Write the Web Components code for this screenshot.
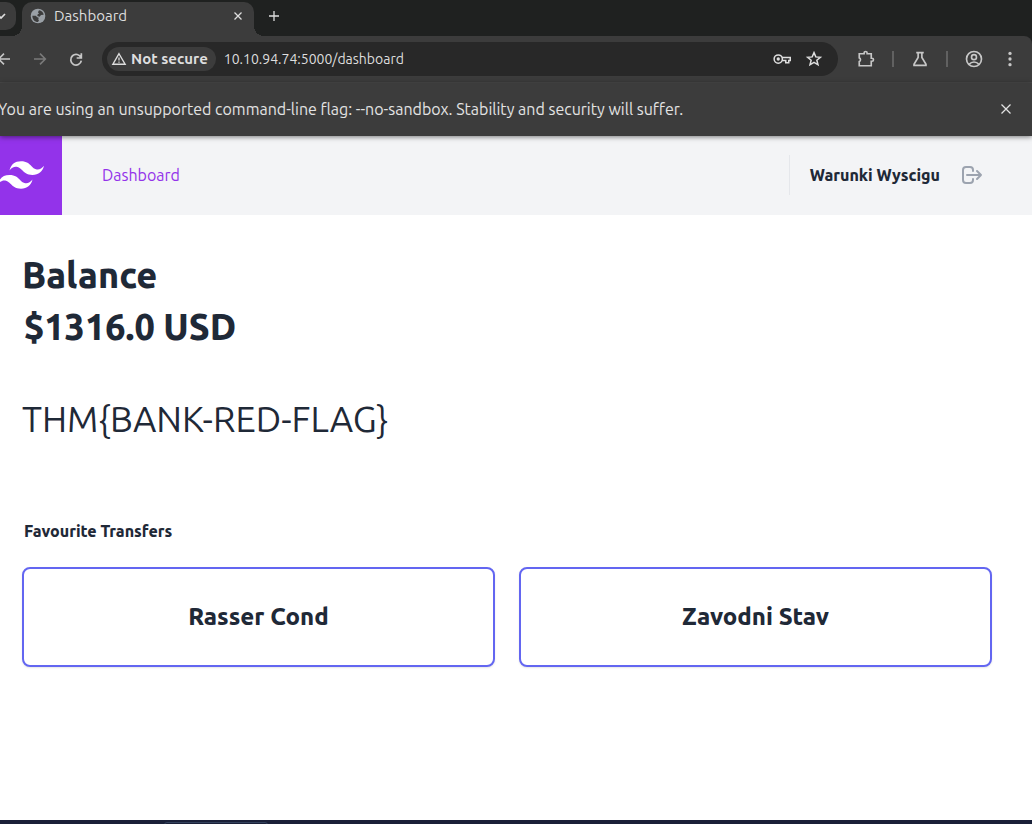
<!DOCTYPE html>
<html lang="en">
<head>
<meta charset="utf-8">
<meta name="viewport" content="width=device-width, initial-scale=1">
<title>Dashboard</title>
<style>
  body { margin: 0; font-family: Ubuntu, "Noto Sans", sans-serif; color: #1f2937; background: #fff; overflow-x: hidden; }
</style>
</head>
<body>
<browser-window></browser-window>

<script>
const ICONS = {
  chevron: '<path d="m6 9 6 6 6-6" stroke-width="2.6"/>',
  back: '<path d="M21 12H4m8-8-8 8 8 8" stroke-width="2.4"/>',
  forward: '<path d="M3 12h17m-8-8 8 8-8 8" stroke-width="2.4"/>',
  reload: '<path d="M20 3.500v7h-7M19.500 10A8 8 0 1 0 20 14.500" stroke-width="2.600"/>',
  close: '<path d="m5 5 14 14M19 5 5 19" stroke-width="2.600"/>',
  thinClose: '<path d="m3 3 18 18M21 3 3 21" stroke-width="2.500"/>',
  plus: '<path d="M12 2v20M2 12h20" stroke-width="2.600"/>',
  globe: '<circle cx="12" cy="12" r="11" fill="#9aa0a6" stroke="none"/><path fill="#3c3c3c" stroke="none" d="M13.500 3.500c4 .5 6.500 3 7 6.500l-4 .5-2 2.500-3.500-1 .5-2.500 2-1-1.500-2zM3.500 11.500h5l2.500 2.500 2 .5-.5 3 1 1-1.500 2.500c-5-.3-8.500-4-8.500-9.500z"/>',
  warning: '<path d="M12 3 22.500 21H1.500z" stroke-width="2.400"/><path d="M12 9.500v5M12 16.300v2" stroke-width="2.200"/>',
  key: '<circle cx="7" cy="12" r="5.500" stroke-width="2"/><circle cx="7" cy="12" r="2.200" fill="currentColor" stroke="none"/><path d="M12 10h11v4h-2v3h-4v-3h-5" stroke-width="2"/>',
  star: '<path d="m12 3.500 2.400 5.700 6.100.5-4.700 4 1.500 6-5.300-3.200-5.300 3.200 1.500-6-4.700-4 6.100-.5z" stroke-width="2"/>',
  puzzle: '<path d="M3 5h6.500V4a2 2 0 0 1 4 0v1H19v6h1a1.800 1.800 0 0 1 0 4h-1v6H3v-5.500a2.700 2.700 0 0 0 0-5z" stroke-width="2.200"/>',
  flask: '<path d="M7 3.500h10M9.500 4v6L4 19v1.500h16V19l-5.500-9V4" stroke-width="2.200"/>',
  avatar: '<circle cx="12" cy="12" r="10" stroke-width="2.200"/><circle cx="12" cy="9.500" r="3.300" stroke-width="2.200"/><path d="M5.500 19c3.500-4 9.500-4 13 0" stroke-width="2.200"/>',
  dots: '<g fill="currentColor" stroke="none"><circle cx="12" cy="4.500" r="2.200"/><circle cx="12" cy="12" r="2.200"/><circle cx="12" cy="19.500" r="2.200"/></g>',
  logout: '<path stroke-linecap="round" stroke-linejoin="round" stroke-width="2" d="M17 16l4-4m0 0l-4-4m4 4H7m6 4v1a3 3 0 01-3 3H6a3 3 0 01-3-3V7a3 3 0 013-3h4a3 3 0 013 3v1"/>'
};

function define(name, markup, setup) {
  const template = document.createElement('template');
  template.innerHTML = '<style>*{box-sizing:border-box}button,input{font:inherit;color:inherit;border:0;background:none;padding:0;margin:0}button{cursor:pointer}</style>' + markup;
  customElements.define(name, class extends HTMLElement {
    constructor() {
      super();
      this.attachShadow({ mode: 'open' }).append(template.content.cloneNode(true));
    }
    connectedCallback() { if (setup) setup(this, this.shadowRoot); }
  });
}

define('ui-icon', `
  <style>
    :host { display: block; flex: none; width: var(--size, 18px); height: var(--size, 18px); }
    svg { display: block; width: 100%; height: 100%; overflow: visible; }
  </style>
  <svg viewBox="0 0 24 24" fill="none" stroke="currentColor" aria-hidden="true"></svg>`,
  (el, root) => { root.querySelector('svg').innerHTML = ICONS[el.getAttribute('name')]; });

define('icon-button', `
  <style>
    :host { display: block; flex: none; width: 36px; height: 34px; }
    button { display: flex; align-items: center; justify-content: center; width: 100%; height: 100%; }
  </style>
  <button type="button"></button>`,
  (el, root) => {
    const button = root.querySelector('button');
    button.setAttribute('aria-label', el.getAttribute('label'));
    const icon = document.createElement('ui-icon');
    icon.setAttribute('name', el.getAttribute('icon'));
    button.replaceChildren(icon);
  });

define('tab-strip', `
  <style>
    :host { display: flex; height: 36px; padding-top: 2px; background: #1f2120; color: #dedede; }
    .search { width: 30px; height: 28px; margin-left: -14px; border-radius: 10px; background: #3c3c3c; --size: 16px; }
    .tab { position: relative; display: flex; align-items: center; width: 232px; height: 34px; margin-left: 6px; padding: 0 0 6px 8px; border-radius: 10px 10px 0 0; background: #3c3c3c; font-size: 15px; line-height: 20px; }
    .tab::before, .tab::after { content: ""; position: absolute; bottom: 0; width: 10px; height: 10px; }
    .tab::before { right: 100%; background: radial-gradient(circle at 0 0, transparent 10px, #3c3c3c 10px); }
    .tab::after { left: 100%; background: radial-gradient(circle at 100% 0, transparent 10px, #3c3c3c 10px); }
    .tab ui-icon { --size: 16px; margin-right: 8px; }
    .title { flex: 1; text-align: left; }
    .close { width: 32px; height: 28px; --size: 12px; }
    .new { width: 40px; height: 28px; --size: 12px; }
  </style>
  <icon-button class="search" icon="chevron" label="Search tabs"></icon-button>
  <div class="tab"><ui-icon name="globe"></ui-icon><button class="title" type="button">Dashboard</button><icon-button class="close" icon="close" label="Close tab"></icon-button></div>
  <icon-button class="new" icon="plus" label="New tab"></icon-button>`);

define('address-bar', `
  <style>
    :host { display: flex; flex: 1; align-items: center; min-width: 0; height: 34px; padding: 0 8px 0 5px; border-radius: 17px; background: #282828; color: #dedede; }
    .chip { display: flex; align-items: center; gap: 5px; flex: none; height: 24px; padding: 0 8px 0 5px; border-radius: 12px; background: #3c3c3c; font-size: 15px; line-height: 20px; font-weight: 600; --size: 14px; }
    input { flex: 1; min-width: 0; height: 24px; margin-left: 8px; font-size: 14px; outline: 0; }
    icon-button { width: 32px; --size: 18px; }
  </style>
  <button class="chip" type="button"><ui-icon name="warning"></ui-icon>Not secure</button>
  <input type="text" aria-label="Address" value="10.10.94.74:5000/dashboard" spellcheck="false">
  <icon-button icon="key" label="Passwords"></icon-button>
  <icon-button icon="star" label="Bookmark"></icon-button>`);

define('tool-bar', `
  <style>
    :host { display: block; background: #1f2120; }
    .row { display: flex; align-items: center; height: 47px; padding: 0 4px 0 0; border-bottom: 1px solid #4a4a4a; border-radius: 0 8px 0 0; background: #3c3c3c; color: #c7c7c7; }
    .nav { --size: 16px; }
    .first { margin-left: -14px; }
    .off { color: #7a7a7a; }
    address-bar { margin: 0 10px 0 8px; }
    .rule { flex: none; width: 2px; height: 16px; margin: 0 8px; background: #616161; }
  </style>
  <div class="row">
    <icon-button class="nav first" icon="back" label="Back"></icon-button>
    <icon-button class="nav off" icon="forward" label="Forward"></icon-button>
    <icon-button class="nav" icon="reload" label="Reload"></icon-button>
    <address-bar></address-bar>
    <icon-button icon="puzzle" label="Extensions"></icon-button>
    <span class="rule"></span>
    <icon-button icon="flask" label="Experiments"></icon-button>
    <span class="rule"></span>
    <icon-button icon="avatar" label="Profile"></icon-button>
    <icon-button icon="dots" label="Menu"></icon-button>
  </div>`);

define('info-bar', `
  <style>
    :host { position: relative; display: flex; align-items: center; height: 53px; padding: 0 8px 2px 0; background: #3c3c3c; color: #e3e3e3; box-shadow: 0 1px 5px rgba(0,0,0,.5); }
    p { flex: 1; margin: 0 0 0 -2px; font-size: 16px; line-height: 24px; white-space: nowrap; }
    icon-button { --size: 12px; }
  </style>
  <p><slot></slot></p>
  <icon-button icon="thinClose" label="Dismiss"></icon-button>`);

define('site-header', `
  <style>
    :host { display: flex; align-items: center; height: 79px; padding-right: 36px; background: #f3f4f6; font-size: 16px; line-height: 24px; }
    .logo { display: flex; align-items: center; justify-content: center; flex: none; width: 80px; height: 100%; margin-left: -18px; padding: 0 2px 2px 0; background: #9333ea; }
    .logo svg { display: block; width: 46px; height: 28px; }
    nav, .user, icon-button { margin-bottom: 2px; }
    nav { flex: 1; padding-left: 40px; font-weight: 450; }
    nav a { color: #9333ea; text-decoration: none; }
    .user { display: flex; align-items: center; height: 40px; padding-left: 20px; border-left: 1px solid #e5e7eb; font-weight: 800; }
    icon-button { width: 48px; margin-left: 8px; color: #9ca3af; --size: 24px; }
  </style>
  <a class="logo" href="#" aria-label="Home"><svg viewBox="0 0 51.034 30.436" fill="#fff" aria-hidden="true"><path d="M25.517 0C18.712 0 14.46 3.382 12.758 10.146c2.552-3.382 5.529-4.65 8.931-3.805 1.941.482 3.329 1.882 4.864 3.432 2.502 2.524 5.398 5.445 11.722 5.445 6.804 0 11.057-3.382 12.758-10.145-2.551 3.382-5.528 4.65-8.93 3.804-1.942-.482-3.33-1.882-4.865-3.431C34.736 2.92 31.841 0 25.517 0zM12.758 15.218C5.954 15.218 1.701 18.6 0 25.364c2.552-3.382 5.529-4.65 8.93-3.805 1.942.482 3.33 1.882 4.865 3.432 2.502 2.524 5.397 5.445 11.722 5.445 6.804 0 11.057-3.381 12.758-10.145-2.552 3.382-5.529 4.65-8.931 3.805-1.941-.483-3.329-1.883-4.864-3.432-2.502-2.524-5.398-5.446-11.722-5.446z"/></svg></a>
  <nav><a href="#dashboard">Dashboard</a></nav>
  <div class="user"><span><slot></slot></span></div>
  <icon-button icon="logout" label="Log out"></icon-button>`);

define('transfer-card', `
  <style>
    :host { display: block; }
    button { display: block; width: 100%; padding: 32px 16px; border: 2px solid #6366f1; border-radius: 8px; background: #fff; box-shadow: 0 1px 2px rgba(0,0,0,.1); font-size: 24px; line-height: 32px; font-weight: 800; text-align: center; }
  </style>
  <button type="button"><slot></slot></button>`);

define('account-page', `
  <style>
    :host { display: block; padding: 34px 40px 40px 22px; }
    h1, h2, p { margin: 0; }
    h1, .amount { font-size: 36px; line-height: 52px; font-weight: 800; }
    .flag { margin-top: 40px; font-size: 36px; line-height: 52px; font-weight: 450; }
    .amount, h2 { padding-left: 2px; }
    h2 { margin-top: 74px; font-size: 16px; line-height: 24px; font-weight: 800; }
    .cards { display: grid; grid-template-columns: 1fr 1fr; gap: 24px; margin-top: 24px; }
  </style>
  <h1>Balance</h1>
  <p class="amount">$1316.0 USD</p>
  <p class="flag">THM{BANK-RED-FLAG}</p>
  <h2>Favourite Transfers</h2>
  <div class="cards">
    <transfer-card>Rasser Cond</transfer-card>
    <transfer-card>Zavodni Stav</transfer-card>
  </div>`);

define('dock-edge', `
  <style>
    :host { display: block; height: 4px; padding: 2px 0 0 164px; background: #1a2038; overflow: hidden; }
    div { width: 104px; height: 8px; border: 1px solid #33415c; border-radius: 3px; }
  </style>
  <div></div>`);

define('browser-window', `
  <style>
    :host { display: flex; flex-direction: column; min-height: 100vh; }
    account-page { flex: 1; }
  </style>
  <tab-strip></tab-strip>
  <tool-bar></tool-bar>
  <info-bar>You are using an unsupported command-line flag: --no-sandbox. Stability and security will suffer.</info-bar>
  <site-header>Warunki Wyscigu</site-header>
  <account-page></account-page>
  <dock-edge></dock-edge>`);
</script>
</body>
</html>
